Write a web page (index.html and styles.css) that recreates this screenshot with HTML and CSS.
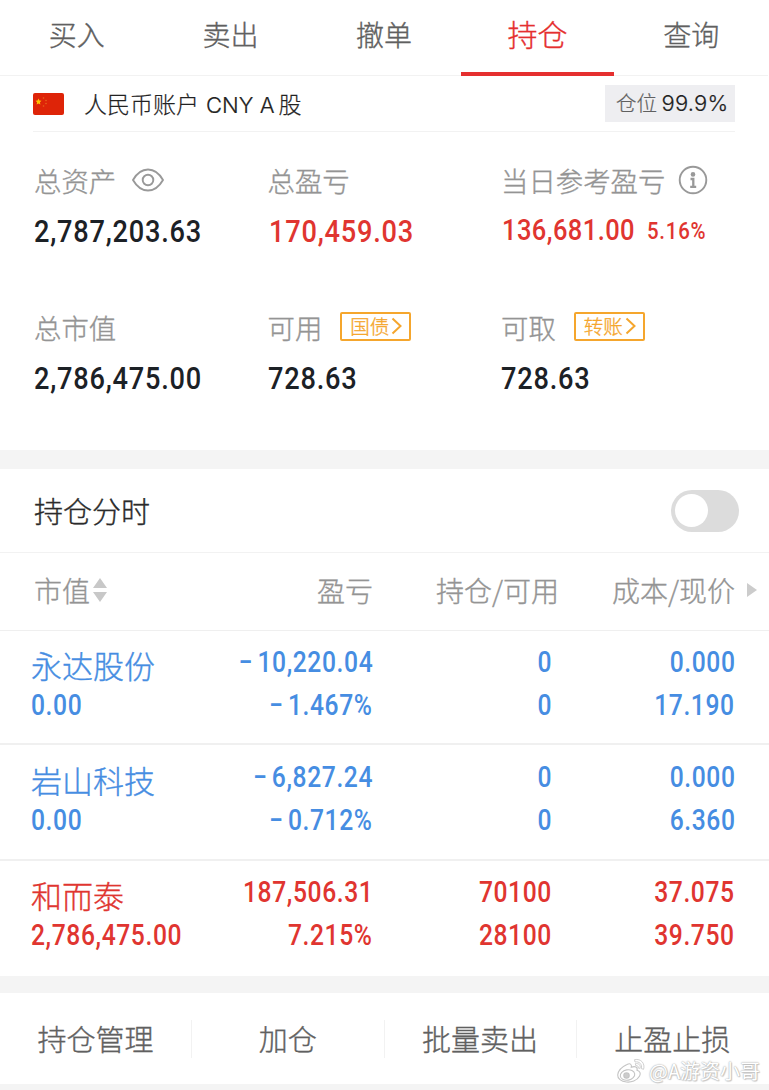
FILE: index.html
```html
<!DOCTYPE html>
<html lang="zh-CN">
<head>
<meta charset="utf-8">
<title>持仓</title>
<link rel="stylesheet" href="styles.css">
</head>
<body>
<nav class="tabs">
  <span class="tab">买入</span>
  <span class="tab">卖出</span>
  <span class="tab">撤单</span>
  <span class="tab tab-active">持仓</span>
  <span class="tab">查询</span>
</nav>

<section class="account">
  <svg class="flag" viewBox="0 0 31 22">
    <rect width="31" height="22" rx="2" fill="#de2408"/>
    <path d="M5.500 5.600l.9 2 2.100.2-1.600 1.500.5 2.200-1.900-1.100-1.900 1.100.5-2.200-1.600-1.500 2.100-.2z" fill="#ffc400"/>
    <g fill="#e8631c"><circle cx="10.500" cy="5" r=".8"/><circle cx="13" cy="7.500" r=".8"/><circle cx="13" cy="10.500" r=".8"/><circle cx="10.500" cy="13" r=".8"/></g>
  </svg>
  <span class="account-name">人民币账户 <span class="latin">CNY A</span>股</span>
  <span class="ratio">仓位 <span class="ratio-value">99.9%</span></span>
</section>

<section class="metrics">
  <div class="metric">
    <div class="label">总资产
      <svg class="eye" viewBox="0 0 32 24" fill="none" stroke="#999" stroke-width="1.900"><path d="M1 12C5 5 10 1.500 16 1.500S27 5 31 12C27 19 22 22.500 16 22.500S5 19 1 12z" stroke-linejoin="round"/><circle cx="16" cy="12" r="5.300"/></svg>
    </div>
    <div class="value"><span class="num">2,787,203.63</span></div>
  </div>
  <div class="metric">
    <div class="label">总盈亏</div>
    <div class="value up"><span class="num shift">170,459.03</span></div>
  </div>
  <div class="metric">
    <div class="label">当日参考盈亏
      <svg class="info" viewBox="0 0 30 30" fill="none" stroke="#999"><circle cx="15" cy="15" r="13.300" stroke-width="1.900"/><circle cx="15" cy="9.400" r="2.300" fill="#999" stroke="none"/><path d="M12.500 14H15.300V21.700M12.200 21.800H18.200" stroke-width="2.300"/></svg>
    </div>
    <div class="value up daily"><span class="num">136,681.00</span><span class="num percent">5.16%</span></div>
  </div>
  <div class="metric">
    <div class="label">总市值</div>
    <div class="value"><span class="num">2,786,475.00</span></div>
  </div>
  <div class="metric">
    <div class="label">可用
      <span class="tag">国债<svg class="chev" viewBox="0 0 11 18"><path d="M1.500 1.500L9.500 9 1.500 16.500"/></svg></span>
    </div>
    <div class="value"><span class="num">728.63</span></div>
  </div>
  <div class="metric">
    <div class="label">可取
      <span class="tag">转账<svg class="chev" viewBox="0 0 11 18"><path d="M1.500 1.500L9.500 9 1.500 16.500"/></svg></span>
    </div>
    <div class="value"><span class="num">728.63</span></div>
  </div>
</section>

<div class="band"></div>

<section class="trend">
  <span class="trend-title">持仓分时</span>
  <span class="switch"><span class="knob"></span></span>
</section>

<section class="table">
  <div class="thead">
    <span class="th th-first">市值<svg class="sort" viewBox="0 0 14 24" fill="#c8c8c8"><path d="M7 0L14 10H0zM0 14H14L7 24z"/></svg></span>
    <span class="th">盈亏</span>
    <span class="th">持仓/可用</span>
    <span class="th">成本/现价</span>
    <svg class="more" viewBox="0 0 10 14" fill="#ccc"><path d="M0 0L10 7 0 14z"/></svg>
  </div>
  <div class="row down">
    <div class="cell first"><span class="name">永达股份</span><span class="num">0.00</span></div>
    <div class="cell"><span class="num"><span class="minus">−</span>10,220.04</span><span class="num"><span class="minus">−</span>1.467%</span></div>
    <div class="cell"><span class="num">0</span><span class="num">0</span></div>
    <div class="cell"><span class="num">0.000</span><span class="num">17.190</span></div>
  </div>
  <div class="row row-middle down">
    <div class="cell first"><span class="name">岩山科技</span><span class="num">0.00</span></div>
    <div class="cell"><span class="num"><span class="minus">−</span>6,827.24</span><span class="num"><span class="minus">−</span>0.712%</span></div>
    <div class="cell"><span class="num">0</span><span class="num">0</span></div>
    <div class="cell"><span class="num">0.000</span><span class="num">6.360</span></div>
  </div>
  <div class="row row-last up">
    <div class="cell first"><span class="name">和而泰</span><span class="num">2,786,475.00</span></div>
    <div class="cell"><span class="num">187,506.31</span><span class="num">7.215%</span></div>
    <div class="cell"><span class="num">70100</span><span class="num">28100</span></div>
    <div class="cell"><span class="num">37.075</span><span class="num">39.750</span></div>
  </div>
</section>

<div class="band band-small"></div>

<footer class="actions">
  <span class="action">持仓管理</span>
  <span class="action">加仓</span>
  <span class="action">批量卖出</span>
  <span class="action">止盈止损</span>
</footer>

<div class="watermark">
  <svg class="weibo" viewBox="0 0 30 26" fill="#fff" stroke="#c4c4c4" stroke-width="1.100">
    <path d="M11 6.500C14 5 16 6 15.300 9.300 19 7.800 22 9 21 12.300 24 13.300 25 15.300 23.600 18 21 22.800 15 24.500 10.500 24 5 23.500 1.500 20.500 1.700 17 2 13 6 8.800 11 6.500z"/>
    <ellipse cx="11.500" cy="17" rx="7.300" ry="5.200" transform="rotate(-10 11.500 17)"/>
    <circle cx="10.500" cy="17.600" r="2.700" fill="#ccc"/>
    <path d="M18.500 1.700C25 .2 29.300 5.500 27.600 11.300L25.300 10.600C26.500 6.500 23.300 3 19 4zM19.300 5.700C23 5 25 7.500 24 10.400L22 9.800C22.500 8.200 21.500 7.300 19.800 7.700z" stroke-width=".8"/>
  </svg>
  <span>@A游资小哥</span>
</div>
</body>
</html>
```
FILE: styles.css
```css
* { box-sizing: border-box; }

body {
  margin: 0;
  width: 769px;
  height: 1090px;
  overflow: hidden;
  position: relative;
  background: #fff;
  color: #2b2b2b;
  font-family: "Noto Sans CJK SC", sans-serif;
  font-weight: 300;
  -webkit-text-stroke: .35px currentColor;
}

.num {
  display: inline-block;
  font-family: Roboto, sans-serif;
  font-weight: 500;
  letter-spacing: .9px;
  transform: scaleX(.85);
  transform-origin: left center;
  white-space: nowrap;
  -webkit-text-stroke: 0;
}
.minus { margin-right: 5px; }

.up { color: #e03530; }
.down { color: #468de2; }

.tabs {
  display: flex;
  width: 768px;
  height: 76px;
  box-shadow: inset 0 -1px #f2f2f2;
}
.tab {
  flex: 1;
  height: 76px;
  line-height: 68px;
  text-align: center;
  font-size: 28px;
  color: #606060;
}
.tab-active {
  color: #e52f2f;
  font-size: 30px;
  line-height: 67px;
  border-bottom: 4px solid #e52f2f;
}

.account {
  display: flex;
  align-items: center;
  height: 56px;
  margin: 0 34px 0 33px;
  border-bottom: 1px solid #f2f2f2;
  -webkit-text-stroke-width: .2px;
}
.flag { width: 31px; height: 22px; }
.account-name {
  margin-left: 20px;
  font-size: 23px;
  line-height: 50px;
  color: #222;
}
.latin {
  margin: 0 4px 0 2px;
  font-family: Inter, sans-serif;
  font-size: 22px;
}
.ratio {
  margin-left: auto;
  width: 130px;
  height: 37px;
  line-height: 34px;
  padding-left: 11px;
  background: #eeeef1;
  color: #606060;
  font-size: 20.5px;
  white-space: nowrap;
}
.ratio-value {
  font-family: Inter, sans-serif;
  font-size: 22px;
  letter-spacing: .2px;
  color: #222;
}

.metrics {
  display: grid;
  grid-template-columns: 233.5px 233.5px 1fr;
  grid-auto-rows: 147px;
  height: 318px;
  padding: 28px 0 0 34px;
}
.label {
  display: flex;
  align-items: center;
  height: 40px;
  font-size: 27.4px;
  line-height: 36px;
  color: #949494;
}
.eye { width: 32px; height: 24px; margin-left: 16px; }
.info { width: 30px; height: 30px; margin-left: 13px; }
.tag {
  display: flex;
  align-items: center;
  width: 71px;
  height: 29px;
  margin: -2px 0 0 18px;
  padding-left: 8px;
  border: 2px solid #f5a62d;
  border-radius: 2px;
  color: #f5a62d;
  font-size: 19.5px;
  line-height: 20px;
}
.chev { width: 11px; height: 18px; margin-left: 2px; fill: none; stroke: #f5a62d; stroke-width: 2; }
.value {
  height: 50px;
  margin-top: 3px;
  font-size: 32px;
  line-height: 50px;
  color: #1c2126;
}
.value.up { color: #e03530; }
.shift { margin-left: 1px; }
.daily { display: flex; font-size: 30px; line-height: 53px; padding-left: 1px; }
.daily .num { letter-spacing: .5px; }
.daily .percent { margin-left: -11px; font-size: 24px; line-height: 56px; letter-spacing: .9px; }

.band { height: 19px; background: #f4f4f4; }
.band-small { height: 17px; }

.trend {
  display: flex;
  align-items: center;
  justify-content: space-between;
  height: 84px;
  padding: 0 30px 0 34px;
  border-bottom: 1px solid #f2f2f2;
  font-size: 29px;
  line-height: 42px;
}
.trend-title { margin-top: -2px; }
.switch {
  width: 68px;
  height: 42px;
  padding: 4px;
  border-radius: 21px;
  background: #dcdcdc;
}
.knob { display: block; width: 33px; height: 33px; border-radius: 50%; background: #fff; }

.row {
  display: grid;
  grid-template-columns: 210px 132px 179px 183px;
  height: 114px;
  padding: 10px 0 0 31px;
  border-bottom: 2px solid #f0f0f0;
}
.row-middle { height: 116px; padding-top: 11px; }
.row-last { height: 115px; border: 0; }

.thead {
  display: grid;
  grid-template-columns: 210px 132px 186px 176px 22px;
  align-items: center;
  height: 78px;
  padding-left: 31px;
  border-bottom: 1px solid #efefef;
  font-size: 28px;
  line-height: 72px;
  color: #949494;
}
.th { height: 76px; text-align: right; }
.th-first { display: flex; align-items: center; height: 72px; margin-top: -4px; padding-left: 3px; }
.sort { width: 14px; height: 24px; margin: 1px 0 0 3px; }
.more { width: 10px; height: 14px; margin: -3px 0 0 12px; }

.cell { display: flex; flex-direction: column; align-items: flex-end; font-size: 29px; }
.cell .num { height: 43px; line-height: 43px; letter-spacing: .7px; transform-origin: right center; }
.first { align-items: flex-start; }
.first .num { transform-origin: left center; }
.name { height: 43px; line-height: 47px; font-size: 31px; }

.actions {
  display: flex;
  width: 768px;
  height: 91px;
  align-items: center;
}
.action {
  flex: 1;
  height: 38px;
  line-height: 36px;
  text-align: center;
  font-size: 29px;
  color: #606060;
  border-right: 1px solid #f2f2f2;
}
.action:last-child { border: 0; }
body::after { content: ""; display: block; height: 6px; background: #f4f4f4; }

.watermark {
  position: absolute;
  left: 616px;
  top: 1058px;
  display: flex;
  align-items: center;
  gap: 3px;
  font-size: 20px;
  font-weight: 400;
  line-height: 26px;
  color: #fff;
  white-space: nowrap;
  -webkit-text-stroke: 0;
  text-shadow: 0 0 1px #aaa, 0 0 2px #bbb, 1px 1px 1px #ccc;
}
.weibo { width: 30px; height: 26px; }
```
